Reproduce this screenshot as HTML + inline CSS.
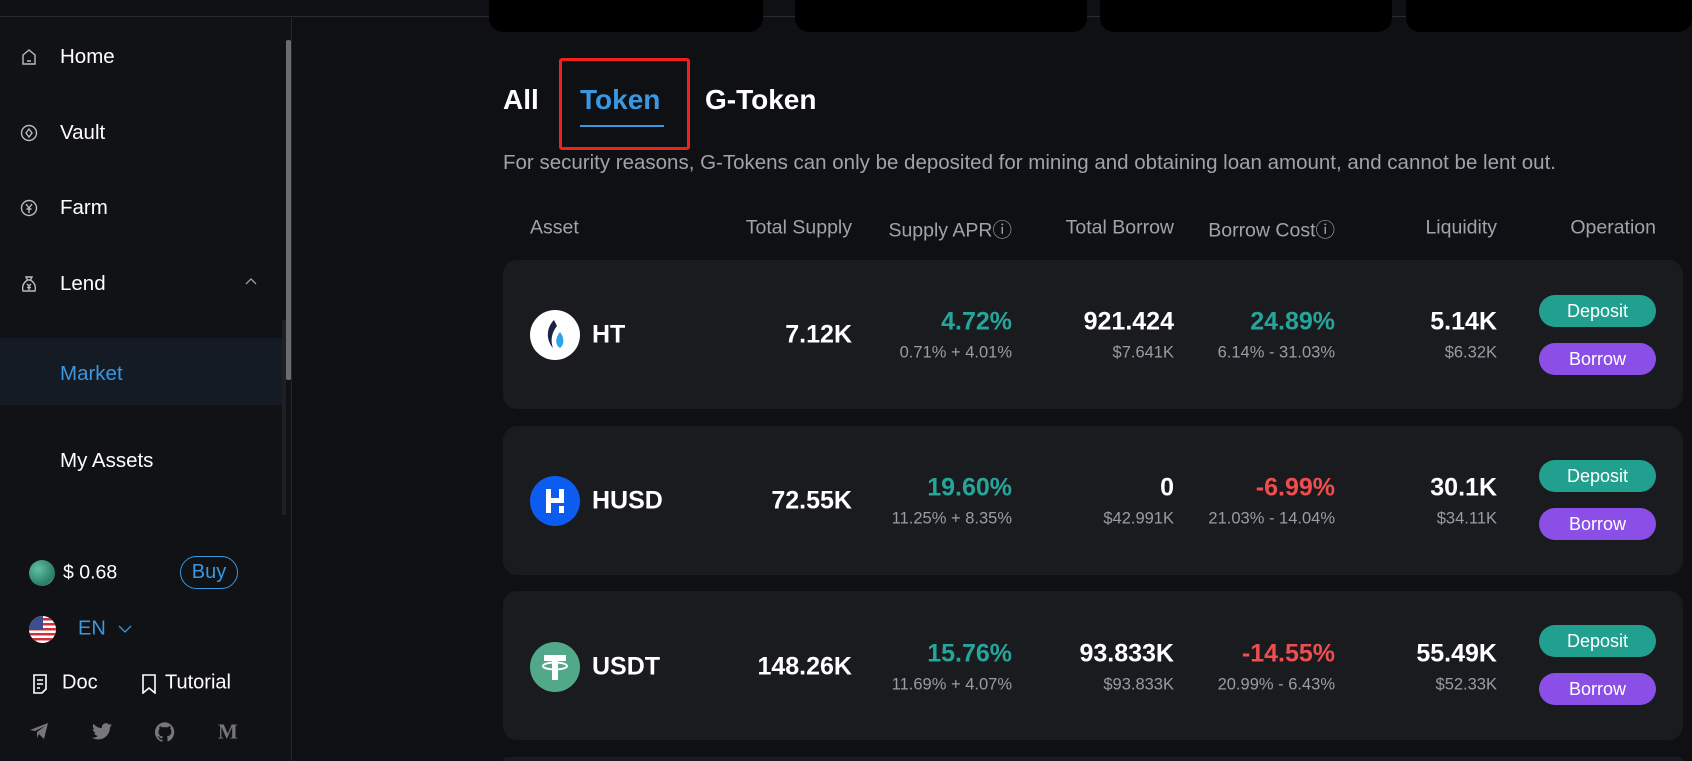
<!DOCTYPE html>
<html><head><meta charset="utf-8"><style>
*{margin:0;padding:0;box-sizing:border-box}
html,body{width:1692px;height:761px;overflow:hidden}
body{background:#0f1013;font-family:"Liberation Sans",sans-serif;color:#fff;position:relative}
.a{position:absolute}
.top{left:0;top:0;width:1692px;height:17px;background:#0f1013;border-bottom:1px solid #2a2b30}
.side{left:0;top:18px;width:292px;height:743px;background:#111215;border-right:1px solid #25262b}
.nav{left:60px;font-size:20.5px;color:#fff;transform:translateY(-50%)}
.ic{left:20px;width:18px;height:18px;transform:translateY(-50%)}
.tc{top:0;height:32px;background:#000;border-radius:0 0 14px 14px}
.card{left:503px;width:1180px;height:149px;background:#1a1b1f;border-radius:14px}
.r{text-align:right;transform:translateY(-50%);white-space:nowrap}
.big{font-size:25px;font-weight:bold}
.sub{font-size:16.5px;color:#9a9ca3}
.g{color:#26a69a}.red{color:#f04d4f}
.btn{left:1539px;width:117px;height:32px;border-radius:16px;font-size:18px;text-align:center;line-height:32px;color:#fff}
.hd{top:228px;font-size:19.5px;color:#a0a3aa;transform:translateY(-50%);white-space:nowrap}
</style></head><body>
<div class="a top"></div>
<div class="a side"></div>
<div class="a" style="left:286px;top:40px;width:5px;height:340px;background:#6b6c70;border-radius:2px"></div>
<div class="a" style="left:282px;top:320px;width:4px;height:195px;background:#1e1f23"></div>
<div class="a" style="left:0;top:338px;width:282px;height:67px;background:#141b24"></div>

<svg class="a ic" style="top:57px" viewBox="0 0 18 18" fill="none" stroke="#bbb" stroke-width="1.4"><path d="M3 7 L9 2 L15 7 V16 H3 Z M7 13 H11"/></svg>
<div class="a nav" style="top:57px">Home</div>
<svg class="a ic" style="top:133px" viewBox="0 0 18 18" fill="none" stroke="#bbb" stroke-width="1.4"><circle cx="9" cy="9" r="7.5"/><path d="M9 5 L12 9 L9 13 L6 9Z"/></svg>
<div class="a nav" style="top:133px">Vault</div>
<svg class="a ic" style="top:208px" viewBox="0 0 18 18" fill="none" stroke="#bbb" stroke-width="1.4"><circle cx="9" cy="9" r="7.5"/><path d="M6 5 L9 9 L12 5 M9 9 V14 M6.5 10 H11.5"/></svg>
<div class="a nav" style="top:208px">Farm</div>
<svg class="a ic" style="top:284px" viewBox="0 0 18 18" fill="none" stroke="#bbb" stroke-width="1.4"><path d="M6 2 H12 L10.5 5 H7.5Z M7.5 5 C3 8 2 12 3 16 H15 C16 12 15 8 10.5 5 M7 9 L9 11 L11 9 M9 11 V15 M7 12.5 H11"/></svg>
<div class="a nav" style="top:284px">Lend</div>
<svg class="a" style="left:245px;top:277px" width="12" height="8" viewBox="0 0 12 8" fill="none" stroke="#aaa" stroke-width="1.2"><path d="M1 7 L6 2 L11 7"/></svg>
<div class="a nav" style="top:374px;color:#3a97e0">Market</div>
<div class="a nav" style="top:461px">My Assets</div>

<div class="a" style="left:29px;top:560px;width:26px;height:26px;border-radius:50%;background:radial-gradient(circle at 35% 35%,#5fc2a0,#2a7a66 70%,#c9e8df)"></div>
<div class="a" style="left:63px;top:573px;font-size:19.5px;transform:translateY(-50%)">$ 0.68</div>
<div class="a" style="left:180px;top:556px;width:58px;height:33px;border:1.5px solid #3a97e0;border-radius:17px;color:#3a97e0;font-size:20px;text-align:center;line-height:30px">Buy</div>
<svg class="a" style="left:29px;top:616px" width="27" height="27" viewBox="0 0 27 27"><defs><clipPath id="c"><circle cx="13.5" cy="13.5" r="13.5"/></clipPath></defs><g clip-path="url(#c)"><rect width="27" height="27" fill="#fff"/><rect y="2" width="27" height="2.5" fill="#d22f3a"/><rect y="7" width="27" height="2.5" fill="#d22f3a"/><rect y="12" width="27" height="2.5" fill="#d22f3a"/><rect y="17" width="27" height="2.5" fill="#d22f3a"/><rect y="22" width="27" height="2.5" fill="#d22f3a"/><rect width="14" height="14" fill="#3d4d8f"/></g></svg>
<div class="a" style="left:78px;top:629px;font-size:20px;color:#3a97e0;transform:translateY(-50%)">EN</div>
<svg class="a" style="left:118px;top:625px" width="14" height="8" viewBox="0 0 14 8" fill="none" stroke="#3a97e0" stroke-width="1.3"><path d="M1 1 L7 7 L13 1"/></svg>
<svg class="a" style="left:31px;top:674px" width="18" height="20" viewBox="0 0 18 20" fill="none" stroke="#fff" stroke-width="1.6"><path d="M3 1 H15 V15 L11 19 H3 Z M6 6 H12 M6 10 H12 M6 14 H9"/></svg>
<div class="a" style="left:62px;top:683px;font-size:20px;transform:translateY(-50%)">Doc</div>
<svg class="a" style="left:140px;top:674px" width="18" height="20" viewBox="0 0 18 20" fill="none" stroke="#fff" stroke-width="1.6"><path d="M3 1 H15 V19 L9 14 L3 19 Z"/></svg>
<div class="a" style="left:165px;top:683px;font-size:20px;transform:translateY(-50%)">Tutorial</div>
<svg class="a" style="left:29px;top:722px" width="20" height="18" viewBox="0 0 20 18" fill="#777"><path d="M1 8 L19 1 L15 17 L10 12 L8 16 L8 10 L16 4 L6 9 Z"/></svg>
<svg class="a" style="left:92px;top:723px" width="20" height="17" viewBox="0 0 24 20" fill="#777"><path d="M24 2.4c-.9.4-1.8.7-2.8.8 1-.6 1.8-1.6 2.2-2.7-1 .6-2 1-3.1 1.2A4.9 4.9 0 0 0 11.9 6 14 14 0 0 1 1.7.9a4.9 4.9 0 0 0 1.500 6.6c-.8 0-1.600-.2-2.200-.6 0 2.400 1.700 4.400 3.900 4.800-.7.2-1.500.2-2.200.1.6 2 2.400 3.400 4.600 3.400A9.900 9.900 0 0 1 0 17.300 14 14 0 0 0 7.500 19.500c9.100 0 14-7.500 14-14v-.6c1-.7 1.800-1.600 2.500-2.500z"/></svg>
<svg class="a" style="left:155px;top:722px" width="20" height="20" viewBox="0 0 24 24" fill="#777"><path d="M12 .3a12 12 0 0 0-3.8 23.4c.6.1.8-.3.8-.6v-2c-3.3.7-4-1.6-4-1.6-.6-1.4-1.4-1.8-1.4-1.8-1-.7.1-.7.1-.7 1.2.1 1.8 1.2 1.8 1.2 1 1.8 2.8 1.3 3.5 1 .1-.8.4-1.3.7-1.6-2.7-.3-5.5-1.3-5.5-6 0-1.2.5-2.3 1.3-3.1-.2-.4-.6-1.6.1-3.2 0 0 1-.3 3.3 1.2a11.5 11.5 0 0 1 6 0C17.3 4.7 18.3 5 18.3 5c.7 1.6.2 2.8.1 3.2.8.8 1.3 1.9 1.3 3.1 0 4.6-2.8 5.6-5.5 5.9.4.4.8 1.1.8 2.2v3.3c0 .3.2.7.8.6A12 12 0 0 0 12 .3"/></svg>
<div class="a" style="left:218px;top:732px;font-size:21px;font-weight:bold;color:#777;font-family:'Liberation Serif',serif;transform:translateY(-50%)">M</div>

<div class="a tc" style="left:489px;width:274px"></div>
<div class="a tc" style="left:795px;width:292px"></div>
<div class="a tc" style="left:1100px;width:292px"></div>
<div class="a tc" style="left:1406px;width:286px"></div>

<div class="a" style="left:503px;top:100px;font-size:28px;font-weight:bold;transform:translateY(-50%)">All</div>
<div class="a" style="left:580px;top:100px;font-size:28px;font-weight:bold;color:#3a97e0;transform:translateY(-50%)">Token</div>
<div class="a" style="left:580px;top:125px;width:84px;height:2px;background:#3a97e0"></div>
<div class="a" style="left:705px;top:100px;font-size:28px;font-weight:bold;transform:translateY(-50%)">G-Token</div>
<div class="a" style="left:559px;top:58px;width:131px;height:92px;border:3px solid #f0201a;border-radius:3px"></div>
<div class="a" style="left:503px;top:163px;font-size:20.5px;color:#a0a3aa;transform:translateY(-50%);white-space:nowrap">For security reasons, G-Tokens can only be deposited for mining and obtaining loan amount, and cannot be lent out.</div>

<div class="a hd" style="left:530px">Asset</div>
<div class="a hd" style="right:840px">Total Supply</div>
<div class="a hd" style="right:680px">Supply APR&#9432;</div>
<div class="a hd" style="right:518px">Total Borrow</div>
<div class="a hd" style="right:357px">Borrow Cost&#9432;</div>
<div class="a hd" style="right:195px">Liquidity</div>
<div class="a hd" style="right:36px">Operation</div>

<div class="a card" style="top:260px"></div>
<div class="a card" style="top:426px"></div>
<div class="a card" style="top:591px"></div>
<div class="a card" style="top:757px;height:4px;border-radius:14px 14px 0 0"></div>

<!-- row1 -->
<svg class="a" style="left:530px;top:310px" width="50" height="50" viewBox="0 0 50 50"><circle cx="25" cy="25" r="25" fill="#fff"/><path d="M24 10 C16 18 16 30 23 38 C20 30 22 22 27 16 C26 14 25 12 24 10Z" fill="#1c2146"/><path d="M30 22 C25 28 25 35 30 38 C35 34 34 27 30 22Z" fill="#2ba5e8"/></svg>
<div class="a big" style="left:592px;top:335px;transform:translateY(-50%)">HT</div>
<div class="a r big" style="right:840px;top:335px">7.12K</div>
<div class="a r big g" style="right:680px;top:322px">4.72%</div>
<div class="a r sub" style="right:680px;top:353px">0.71% + 4.01%</div>
<div class="a r big" style="right:518px;top:322px">921.424</div>
<div class="a r sub" style="right:518px;top:353px">$7.641K</div>
<div class="a r big g" style="right:357px;top:322px">24.89%</div>
<div class="a r sub" style="right:357px;top:353px">6.14% - 31.03%</div>
<div class="a r big" style="right:195px;top:322px">5.14K</div>
<div class="a r sub" style="right:195px;top:353px">$6.32K</div>
<div class="a btn" style="top:295px;background:#22a08f">Deposit</div>
<div class="a btn" style="top:343px;background:#8b4fe8">Borrow</div>

<!-- row2 -->
<svg class="a" style="left:530px;top:476px" width="50" height="50" viewBox="0 0 50 50"><circle cx="25" cy="25" r="25" fill="#0d5cf0"/><path d="M16 13 H21 V22 H29 V13 H34 V27 H21 V37 H16Z M29 30 H34 V37 H29Z" fill="#fff"/></svg>
<div class="a big" style="left:592px;top:501px;transform:translateY(-50%)">HUSD</div>
<div class="a r big" style="right:840px;top:501px">72.55K</div>
<div class="a r big g" style="right:680px;top:488px">19.60%</div>
<div class="a r sub" style="right:680px;top:519px">11.25% + 8.35%</div>
<div class="a r big" style="right:518px;top:488px">0</div>
<div class="a r sub" style="right:518px;top:519px">$42.991K</div>
<div class="a r big red" style="right:357px;top:488px">-6.99%</div>
<div class="a r sub" style="right:357px;top:519px">21.03% - 14.04%</div>
<div class="a r big" style="right:195px;top:488px">30.1K</div>
<div class="a r sub" style="right:195px;top:519px">$34.11K</div>
<div class="a btn" style="top:460px;background:#22a08f">Deposit</div>
<div class="a btn" style="top:508px;background:#8b4fe8">Borrow</div>

<!-- row3 -->
<svg class="a" style="left:530px;top:642px" width="50" height="50" viewBox="0 0 50 50"><circle cx="25" cy="25" r="25" fill="#52a98a"/><path d="M14 13 H36 V19 H28 V38 H22 V19 H14Z" fill="#fff"/><ellipse cx="25" cy="24" rx="12" ry="3.5" fill="none" stroke="#fff" stroke-width="2"/></svg>
<div class="a big" style="left:592px;top:667px;transform:translateY(-50%)">USDT</div>
<div class="a r big" style="right:840px;top:667px">148.26K</div>
<div class="a r big g" style="right:680px;top:654px">15.76%</div>
<div class="a r sub" style="right:680px;top:685px">11.69% + 4.07%</div>
<div class="a r big" style="right:518px;top:654px">93.833K</div>
<div class="a r sub" style="right:518px;top:685px">$93.833K</div>
<div class="a r big red" style="right:357px;top:654px">-14.55%</div>
<div class="a r sub" style="right:357px;top:685px">20.99% - 6.43%</div>
<div class="a r big" style="right:195px;top:654px">55.49K</div>
<div class="a r sub" style="right:195px;top:685px">$52.33K</div>
<div class="a btn" style="top:625px;background:#22a08f">Deposit</div>
<div class="a btn" style="top:673px;background:#8b4fe8">Borrow</div>
</body></html>
